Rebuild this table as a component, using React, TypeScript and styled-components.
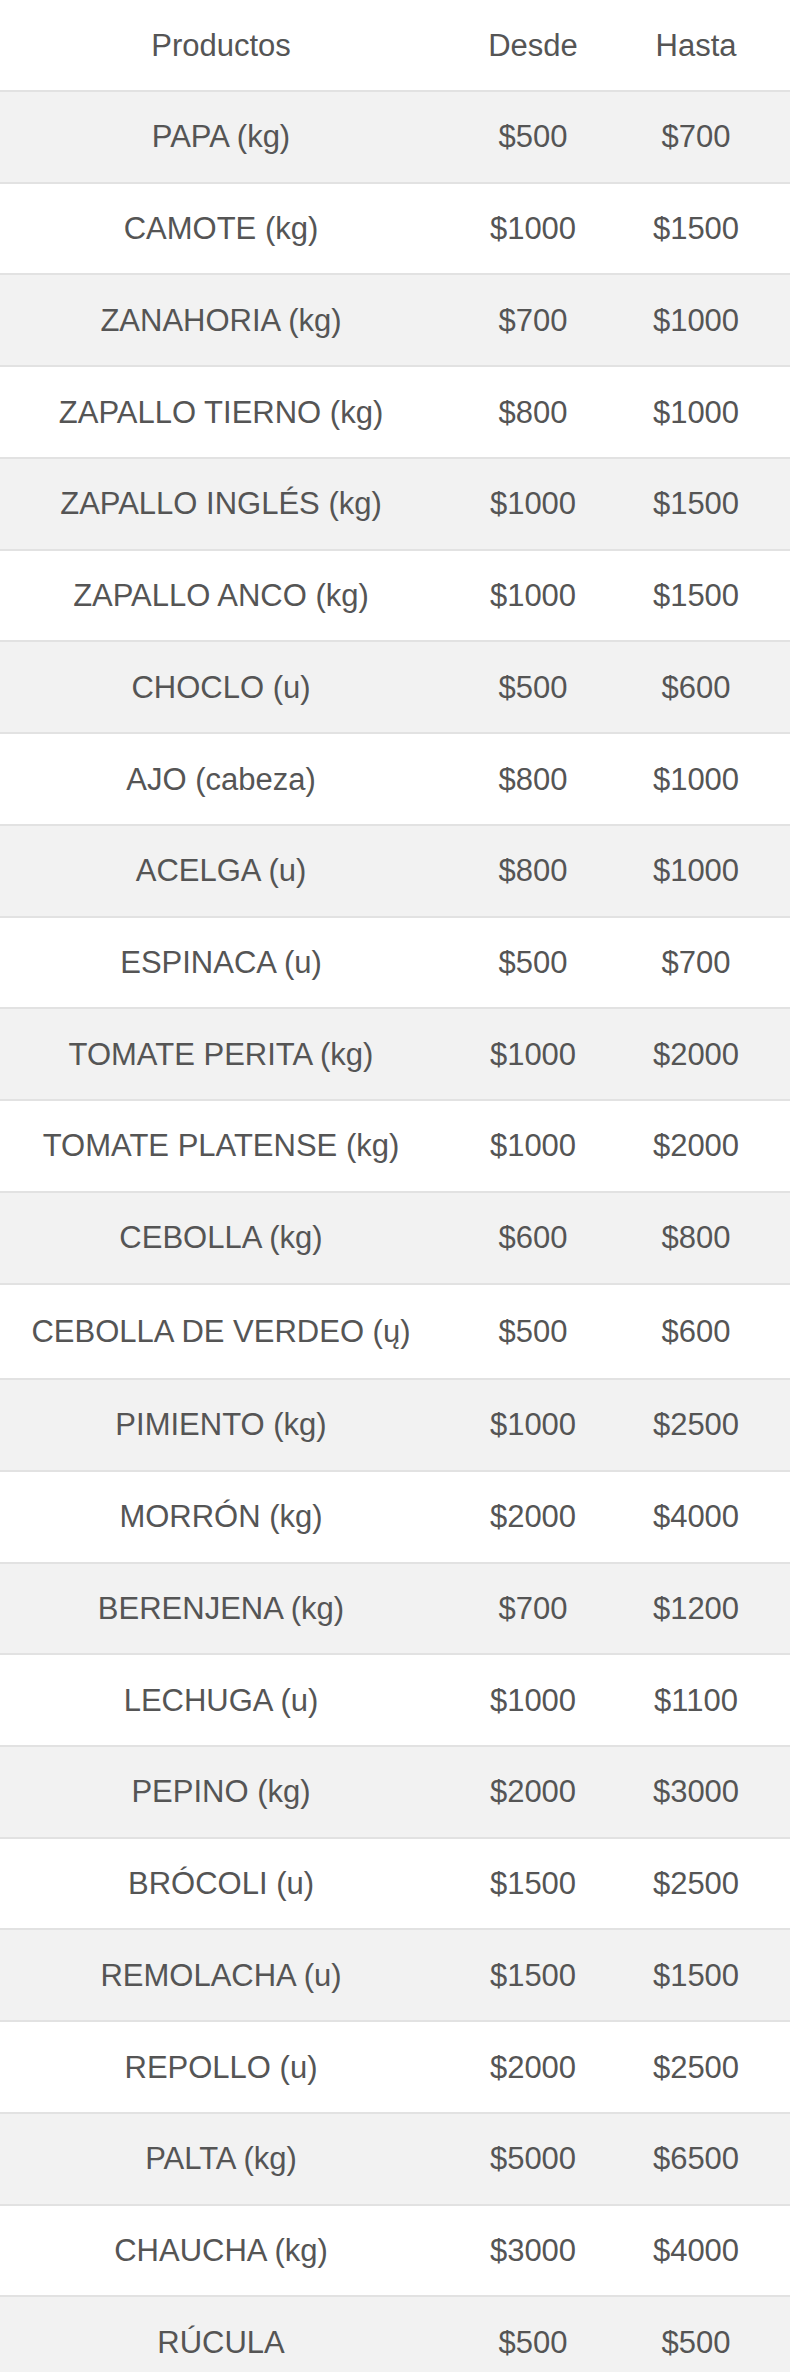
import React from 'react';
import styled, { createGlobalStyle } from 'styled-components';

const GlobalStyle = createGlobalStyle`
  html, body {
    margin: 0;
    padding: 0;
    background: #fff;
  }
  body {
    font-family: "Liberation Sans", Arial, sans-serif;
    color: #555;
  }
`;

interface Producto {
  nombre: string;
  desde: number;
  hasta: number;
  alto?: boolean;
}

const productos: Producto[] = [
  { nombre: 'PAPA (kg)', desde: 500, hasta: 700 },
  { nombre: 'CAMOTE (kg)', desde: 1000, hasta: 1500 },
  { nombre: 'ZANAHORIA (kg)', desde: 700, hasta: 1000 },
  { nombre: 'ZAPALLO TIERNO (kg)', desde: 800, hasta: 1000 },
  { nombre: 'ZAPALLO INGLÉS (kg)', desde: 1000, hasta: 1500 },
  { nombre: 'ZAPALLO ANCO (kg)', desde: 1000, hasta: 1500 },
  { nombre: 'CHOCLO (u)', desde: 500, hasta: 600 },
  { nombre: 'AJO (cabeza)', desde: 800, hasta: 1000 },
  { nombre: 'ACELGA (u)', desde: 800, hasta: 1000 },
  { nombre: 'ESPINACA (u)', desde: 500, hasta: 700 },
  { nombre: 'TOMATE PERITA (kg)', desde: 1000, hasta: 2000 },
  { nombre: 'TOMATE PLATENSE (kg)', desde: 1000, hasta: 2000 },
  { nombre: 'CEBOLLA (kg)', desde: 600, hasta: 800 },
  { nombre: 'CEBOLLA DE VERDEO (ų)', desde: 500, hasta: 600, alto: true },
  { nombre: 'PIMIENTO (kg)', desde: 1000, hasta: 2500 },
  { nombre: 'MORRÓN (kg)', desde: 2000, hasta: 4000 },
  { nombre: 'BERENJENA (kg)', desde: 700, hasta: 1200 },
  { nombre: 'LECHUGA (u)', desde: 1000, hasta: 1100 },
  { nombre: 'PEPINO (kg)', desde: 2000, hasta: 3000 },
  { nombre: 'BRÓCOLI (u)', desde: 1500, hasta: 2500 },
  { nombre: 'REMOLACHA (u)', desde: 1500, hasta: 1500 },
  { nombre: 'REPOLLO (u)', desde: 2000, hasta: 2500 },
  { nombre: 'PALTA (kg)', desde: 5000, hasta: 6500 },
  { nombre: 'CHAUCHA (kg)', desde: 3000, hasta: 4000 },
  { nombre: 'RÚCULA', desde: 500, hasta: 500 },
];

const Tabla = styled.div`
  width: 790px;
  display: flex;
  flex-direction: column;
  font-size: 31px;
`;

const Fila = styled.div<{ $gris?: boolean; $alto?: boolean }>`
  display: grid;
  grid-template-columns: 442px 182px 144px 1fr;
  align-items: center;
  height: ${p => (p.$alto ? '93.5px' : '89.74px')};
  border-top: 2px solid #e2e2e2;
  background: ${p => (p.$gris ? '#f2f2f2' : '#fff')};
`;

const Encabezado = styled(Fila)`
  height: 90px;
  border-top: none;
  background: #fff;
`;

const Celda = styled.div`
  text-align: center;
  white-space: nowrap;
  line-height: 1;
`;

const App = () => {
  return (
    <>
      <GlobalStyle />
      <Tabla>
        <Encabezado>
          <Celda>Productos</Celda>
          <Celda>Desde</Celda>
          <Celda>Hasta</Celda>
        </Encabezado>
        {productos.map((p, idx) => (
          <Fila key={p.nombre} $gris={idx % 2 === 0} $alto={p.alto}>
            <Celda>{p.nombre}</Celda>
            <Celda>${p.desde}</Celda>
            <Celda>${p.hasta}</Celda>
          </Fila>
        ))}
      </Tabla>
    </>
  );
};

export default App;
